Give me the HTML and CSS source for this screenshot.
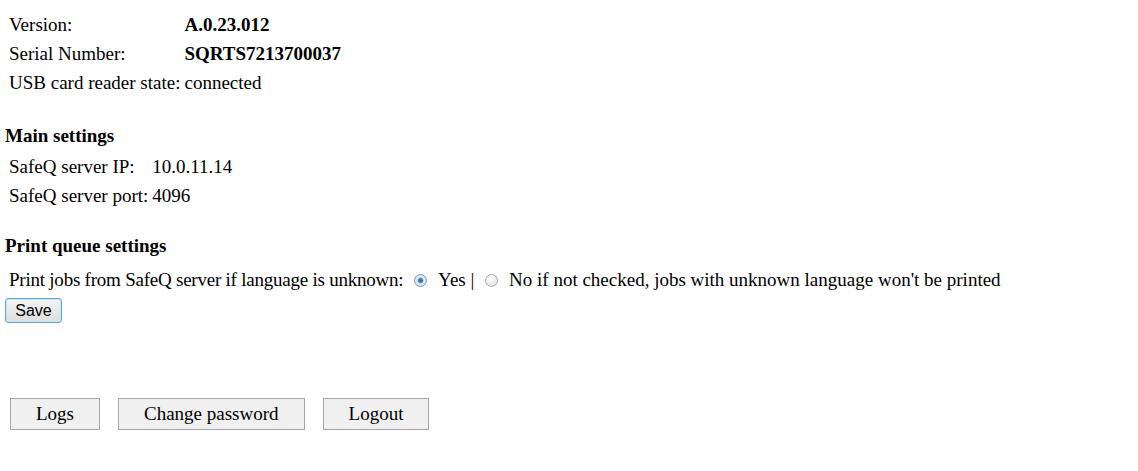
FILE: index.html
```html
<!DOCTYPE html>
<html lang="en">
<head>
    <meta charset="UTF-8">
    <title>SafeQ Terminal</title>
    <link rel="stylesheet" href="styles.css">
</head>
<body>
    <table class="info">
        <tr><td>Version:</td><td class="strong">A.0.23.012</td></tr>
        <tr><td>Serial Number:</td><td class="strong">SQRTS7213700037</td></tr>
        <tr><td>USB card reader state:</td><td>connected</td></tr>
    </table>

    <h3>Main settings</h3>
    <table class="info">
        <tr><td>SafeQ server IP:</td><td>10.0.11.14</td></tr>
        <tr><td>SafeQ server port:</td><td>4096</td></tr>
    </table>

    <h3 class="queue-title">Print queue settings</h3>
    <form class="queue">
        <div class="queue-row"><span class="question">Print jobs from SafeQ server if language is unknown:</span> <span class="radio checked"></span>Yes <span class="sep">|</span> <span class="radio"></span>No if not checked, jobs with unknown language won't be printed</div>
        <button type="button" class="save">Save</button>
    </form>

    <div class="actions">
        <button type="button">Logs</button>
        <button type="button">Change password</button>
        <button type="button">Logout</button>
    </div>
</body>
</html>
```

FILE: styles.css
```css
body {
    margin: 0;
    padding: 9px 5px;
    font-family: "Liberation Serif", "Times New Roman", serif;
    font-size: 19px;
    color: #000;
    background: #fff;
}
.info {
    border-collapse: separate;
    border-spacing: 2px;
    margin-left: 1px;
}
.info td {
    padding: 1px;
    height: 25px;
    vertical-align: middle;
}
.info .strong {
    font-weight: bold;
}
h3 {
    font-size: 19px;
    font-weight: bold;
    margin: 27px 0 4px 0;
}
.queue-title {
    margin-top: 24px;
}
.queue-row {
    padding-left: 4px;
    height: 37px;
    line-height: 37px;
    white-space: nowrap;
}
.question {
    letter-spacing: -0.23px;
}
.radio {
    display: inline-block;
    width: 11px;
    height: 11px;
    border: 1px solid #a8a8a8;
    border-radius: 50%;
    background: radial-gradient(circle at 40% 35%, #fff, #dcdcdc);
    margin: 0 11px 0 6px;
    vertical-align: -1px;
}
.radio.checked {
    background: radial-gradient(circle, #1d5f9c 0, #3c8ad0 2px, #e8f1fa 3.5px, #cfd9e3 6px);
    border-color: #7d9cba;
}
.save {
    display: block;
    font-family: "Liberation Sans", Arial, sans-serif;
    font-size: 16px;
    padding: 0 6px;
    height: 25px;
    width: 57px;
    border: 1px solid #5ea6d8;
    border-radius: 3px;
    background: linear-gradient(#f4f4f4, #dedede);
    box-shadow: inset 0 0 0 1px #c4e4f8;
    color: #000;
}
.actions {
    margin-top: 75px;
    padding-left: 5px;
    display: flex;
    gap: 18px;
}
.actions button {
    font-family: "Liberation Serif", "Times New Roman", serif;
    font-size: 19px;
    height: 32px;
    padding: 0 25px;
    background: #f0f0f0;
    border: 1px solid #a6a6a6;
    border-radius: 0;
    color: #000;
}
```
